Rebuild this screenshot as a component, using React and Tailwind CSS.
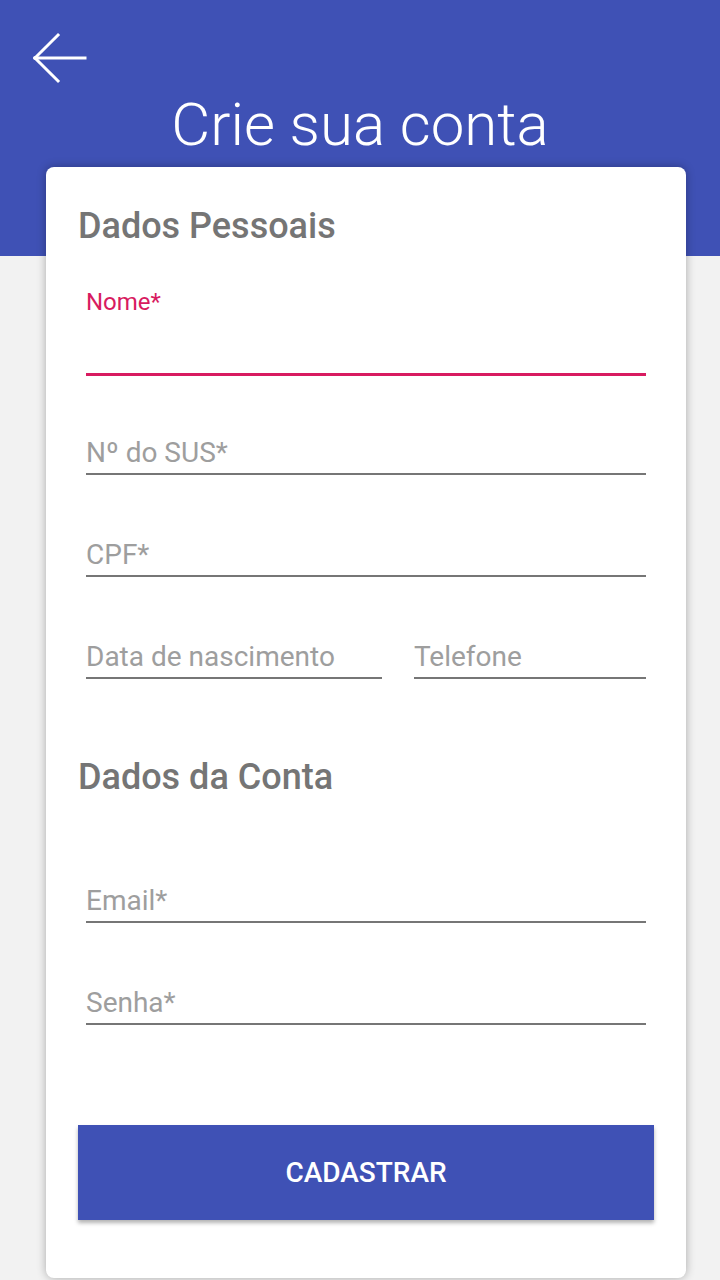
import React from 'react'

function Field({ label, className = '' }) {
  return (
    <div className={`border-b-2 border-[#767676] pb-[4px] ${className}`}>
      <span className="block text-[28px] leading-[32px] text-[#9e9e9e]">{label}</span>
    </div>
  )
}

export default function App() {
  return (
    <div className="min-h-screen bg-[#f2f2f2] font-['Roboto',sans-serif]">
      {/* Top bar */}
      <div className="h-[256px] bg-[#3f51b5] pt-[32px]">
        <div className="pl-[32px]">
          <svg width="56" height="52" viewBox="0 0 56 52" fill="none" stroke="white" strokeWidth="3" strokeLinecap="square">
            <path d="M3 26H53" />
            <path d="M3 26L26 3" />
            <path d="M3 26L26 49" />
          </svg>
        </div>
        <h1 className="mt-[6px] text-center text-[60px] leading-[70px] font-light text-white">Crie sua conta</h1>
      </div>

      {/* Form card */}
      <div className="relative mt-[-89px] ml-[46px] w-[640px] rounded-[8px] bg-white px-[32px] pt-[38px] pb-[58px] shadow-[0_0_10px_rgba(0,0,0,0.3)]">
        <h2 className="text-[36px] leading-[42px] font-medium text-[#757575]">Dados Pessoais</h2>

        <div className="mx-[8px]">
          <div className="mt-[42px] text-[24px] leading-[27px] text-[#d81b60]">Nome*</div>
          <div className="mt-[57px] h-[3px] bg-[#d81b60]" />

          <Field label="Nº do SUS*" className="mt-[61px]" />
          <Field label="CPF*" className="mt-[64px]" />

          <div className="mt-[64px] flex gap-[32px]">
            <Field label="Data de nascimento" className="w-[296px]" />
            <Field label="Telefone" className="flex-1" />
          </div>
        </div>

        <h2 className="mt-[77px] text-[36px] leading-[42px] font-medium text-[#757575]">Dados da Conta</h2>

        <div className="mx-[8px]">
          <Field label="Email*" className="mt-[87px]" />
          <Field label="Senha*" className="mt-[64px]" />
        </div>

        <button className="mt-[100px] flex h-[95px] w-full items-center justify-center bg-[#3f51b5] text-[28px] font-medium text-white shadow-[0_3px_4px_rgba(0,0,0,0.3)]">
          CADASTRAR
        </button>
      </div>
    </div>
  )
}
